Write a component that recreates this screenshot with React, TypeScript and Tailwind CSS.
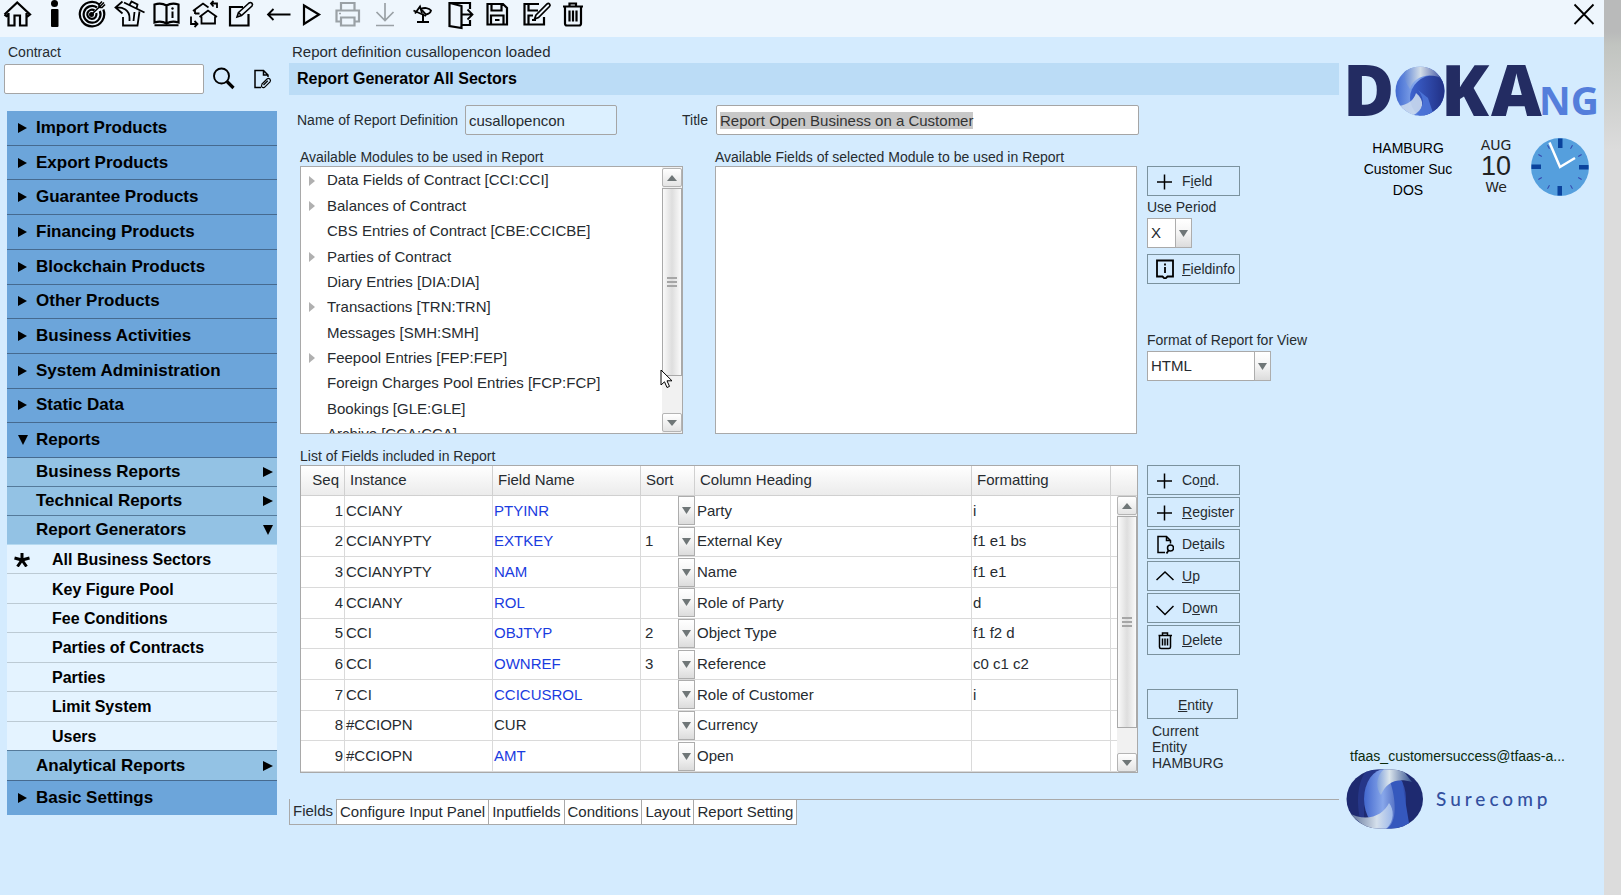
import { useEffect, useRef, type ReactNode } from "react";
import { cx } from "class-variance-authority";

const TOOL_SIZE = 37;

interface Tool {
  label: string;
  disabled?: boolean;
  drawing: ReactNode;
}

// Drawings share one strip, each tool shows its own 37px slice of it
const TOOLS: Tool[] = [
  {
    label: "Home",
    drawing: (
      <path d="M8.5 13V25.5H14.5V15.5H20V25.5H26.5V13M4.5 14.5L17.2 2.5L30 14.5L28 16L26.5 14.5M4.5 14.5L6.5 16L8.5 14" />
    ),
  },
  {
    label: "Info",
    drawing: (
      <g fill="currentColor" stroke="none">
        <circle cx="54.5" cy="3.5" r="3.5" />
        <rect x="51" y="9" width="7.5" height="18" rx="1" />
      </g>
    ),
  },
  {
    label: "Target",
    drawing: (
      <>
        <path d="M99.5 4.5A12.2 12.2 0 1 0 103.3 9.5" />
        <path d="M97 7.5A8.4 8.4 0 1 0 99.8 11" />
        <path d="M94.5 10.5A4.6 4.6 0 1 0 96.3 13" />
        <path d="M91 15L104 2.5M99 7.5V4.5L102 1.5M99.5 7.5H102L105 4.5" strokeWidth="1.6" />
        <circle cx="91.5" cy="14.5" r="1.4" fill="currentColor" />
      </>
    ),
  },
  {
    label: "Restore",
    drawing: (
      <>
        <path d="M122.500 1.500L115.500 7.500L122.500 13.500M116 7.500C123 7 129.500 10 129.500 18V21" strokeWidth="1.800" />
        <path
          d="M124 2.500L144.500 12.500M129.500 5L131.500 1.500L137.500 4.500L136.500 8.500M123 17V25.500H137.500L139.500 11.500M134.500 12L133.500 21"
          strokeWidth="1.800"
        />
      </>
    ),
  },
  {
    label: "Manual",
    drawing: (
      <>
        <path d="M166.500 5.500C163 3.500 158 3.500 154.500 4.500V22.500C158 21.500 163 21.500 166.500 23.500C170 21.500 175 21.500 178.500 22.500V4.500C175 3.500 170 3.500 166.500 5.500ZM166.500 5.500V23" />
        <path d="M154.500 25.200H178.500M172.500 11.500V18" strokeWidth="2" />
        <circle cx="172.500" cy="8.500" r="1.200" fill="currentColor" stroke="none" />
      </>
    ),
  },
  {
    label: "Switch entity",
    drawing: (
      <>
        <path d="M195 14V9.500L203 3.500L208.500 7.500M193 11L195 9.500M195 13.500H199.500" strokeWidth="1.800" />
        <path d="M201.500 16.500V23.500H215V16.500M199.500 17L208 10.500L217 17" strokeWidth="1.800" />
        <path d="M213.500 1L211 3.500L213.500 6.500M211 3.500H217V8M191 16.500V24H197M194.500 21L197.500 24L194.500 27" strokeWidth="1.800" />
      </>
    ),
  },
  {
    label: "Edit",
    drawing: (
      <>
        <path d="M243 7H230V25.500H248.500V14" />
        <path d="M238.500 12.500L249 3C251 1.500 253.500 4 252 6L241.500 15.500L237 17Z M239 13L241.500 15.500" strokeWidth="1.600" />
      </>
    ),
  },
  { label: "Back", drawing: <path d="M290.500 14.500H268M273.500 9L268 14.500L273.500 20" strokeWidth="1.800" /> },
  { label: "Run", drawing: <path d="M304 5.500V24L319 14.500Z" /> },
  {
    label: "Print",
    disabled: true,
    drawing: (
      <>
        <path d="M341 10V3H354.500V10M341 21.500H336.500V10.500H359V21.500H354.500M341 17.500H354.500V25.500H341Z" />
        <path d="M339 13.500H341" strokeWidth="1.500" />
      </>
    ),
  },
  {
    label: "Download",
    disabled: true,
    drawing: <path d="M385 3V20M376.500 12L385 20.500L393.500 12M376 25.500H394" strokeWidth="1.700" />,
  },
  {
    label: "Lamp",
    drawing: (
      <>
        <path d="M417 22H429M423 21.500V13.500" strokeWidth="2" />
        <path d="M413.500 10.500L426 16M415 13.500L420 6.500L422 13" strokeWidth="1.900" />
        <path d="M420.500 9C424 7.500 429 7.500 431 10.500C430.500 12.500 428.500 14 426 14.500L421.500 9.500" strokeWidth="1.800" />
      </>
    ),
  },
  {
    label: "Leave",
    drawing: (
      <>
        <path d="M470 9V3H449.500V26L461.500 28V6L450 3M462 25H470V20" />
        <path d="M462 14.500H472.500M467.500 9.500L472.500 14.500L467.500 19.500" strokeWidth="1.800" />
      </>
    ),
  },
  {
    label: "Save",
    drawing: (
      <path d="M487.500 4H503L507 8V24.500H487.500ZM491.500 4V10.500H501.500V4M491 24.500V15.500H503.500V24.500M495 20H499.500" />
    ),
  },
  {
    label: "Save as",
    drawing: (
      <>
        <path d="M539 4H524.500V24.500H544V17M528.500 4V10.500H538M528.500 24.500V15.500H533M532 20H536" />
        <path d="M536 15L547 4C549 2.500 551 5 549.500 6.500L538.500 17.500L534.500 19Z" strokeWidth="1.700" />
      </>
    ),
  },
  {
    label: "Delete",
    drawing: (
      <path d="M563 6.500H583M569.500 6V3.500H576V6M565 7V23.500Q565 25.500 567 25.500H579Q581 25.500 581 23.500V7M569.500 10.500V21.500M573 10.500V21.500M576.500 10.500V21.500" />
    ),
  },
];

const TOP_MENU = [
  "Import Products",
  "Export Products",
  "Guarantee Products",
  "Financing Products",
  "Blockchain Products",
  "Other Products",
  "Business Activities",
  "System Administration",
  "Static Data",
  "Reports",
];

const REPORT_MENU = ["Business Reports", "Technical Reports", "Report Generators"];

const GENERATOR_MENU = [
  "All Business Sectors",
  "Key Figure Pool",
  "Fee Conditions",
  "Parties of Contracts",
  "Parties",
  "Limit System",
  "Users",
];

const MODULES = [
  { name: "Data Fields of Contract [CCI:CCI]", open: true },
  { name: "Balances of Contract", open: true },
  { name: "CBS Entries of Contract [CBE:CCICBE]" },
  { name: "Parties of Contract", open: true },
  { name: "Diary Entries [DIA:DIA]" },
  { name: "Transactions [TRN:TRN]", open: true },
  { name: "Messages [SMH:SMH]" },
  { name: "Feepool Entries [FEP:FEP]", open: true },
  { name: "Foreign Charges Pool Entries [FCP:FCP]" },
  { name: "Bookings [GLE:GLE]" },
  { name: "Archive [CCA:CCA]" },
];

const FIELDS = [
  { instance: "CCIANY", field: "PTYINR", sort: "", heading: "Party", format: "i" },
  { instance: "CCIANYPTY", field: "EXTKEY", sort: "1", heading: "External Key", format: "f1 e1 bs" },
  { instance: "CCIANYPTY", field: "NAM", sort: "", heading: "Name", format: "f1 e1" },
  { instance: "CCIANY", field: "ROL", sort: "", heading: "Role of Party", format: "d" },
  { instance: "CCI", field: "OBJTYP", sort: "2", heading: "Object Type", format: "f1 f2 d" },
  { instance: "CCI", field: "OWNREF", sort: "3", heading: "Reference", format: "c0 c1 c2" },
  { instance: "CCI", field: "CCICUSROL", sort: "", heading: "Role of Customer", format: "i" },
  { instance: "#CCIOPN", field: "CUR", sort: "", heading: "Currency", format: "", plain: true },
  { instance: "#CCIOPN", field: "AMT", sort: "", heading: "Open", format: "" },
];

const TABS = ["Fields", "Configure Input Panel", "Inputfields", "Conditions", "Layout", "Report Setting"];

function Triangle({ dir, className = "size-[10px]" }: { dir: "right" | "down" | "up"; className?: string }) {
  const points = { right: "0,0 10,5 0,10", down: "0,0 10,0 5,10", up: "0,10 10,10 5,0" }[dir];
  return (
    <svg viewBox="0 0 10 10" preserveAspectRatio="none" className={cx("shrink-0", className)} aria-hidden="true">
      <polygon points={points} fill="currentColor" />
    </svg>
  );
}

function Toolbar() {
  return (
    <header className="flex h-[37px] items-start justify-between bg-[#eef6fd] text-black">
      <div className="flex">
        {TOOLS.map((tool, i) => (
          <button
            key={tool.label}
            type="button"
            aria-label={tool.label}
            disabled={tool.disabled}
            className={cx("size-[37px] shrink-0", tool.disabled && "text-[#9aa1a6]")}
          >
            <svg
              viewBox={`${i * TOOL_SIZE} 0 ${TOOL_SIZE} ${TOOL_SIZE}`}
              className="size-full overflow-visible"
              fill="none"
              stroke="currentColor"
              strokeWidth="2.2"
            >
              {tool.drawing}
            </svg>
          </button>
        ))}
      </div>
      <button type="button" aria-label="Close" className="mr-[9px] h-7 w-[22px]">
        <svg viewBox="0 0 22 28" className="size-full" fill="none" stroke="currentColor" strokeWidth="1.8">
          <path d="M1.500 4.500L20.500 24M20.500 4.500L1.500 24" />
        </svg>
      </button>
    </header>
  );
}

function Sidebar() {
  return (
    <div className="w-[289px] shrink-0">
      <label htmlFor="contract" className="flex h-[27px] items-center pl-2 pt-1 text-[14px]">
        Contract
      </label>
      <div className="flex h-[30px] items-center pl-1">
        <input id="contract" className="h-[30px] w-[200px] rounded-[2px] border border-[#a5a5a5] bg-white px-1 text-[15px]" />
        <button type="button" aria-label="Search contract" className="ml-2 size-6">
          <svg viewBox="0 0 24 24" fill="none" stroke="black" className="size-full">
            <circle cx="9.500" cy="9" r="7.500" strokeWidth="1.900" />
            <path d="M15 14.500L21.500 21" strokeWidth="3.200" />
          </svg>
        </button>
        <button type="button" aria-label="Attachments" className="ml-4 size-6">
          <svg viewBox="0 0 24 24" fill="none" stroke="black" strokeWidth="1.500" className="size-full">
            <path d="M9 20.500H3V3.500H11.500L16 8V10M11.500 3.500V8H16" />
            <path
              d="M9.500 17.500L15 12C17 10.500 19.500 12.500 18 14.800L12.500 20.300C10.500 21.500 8.500 19.500 10 17.500M11.500 18L15.800 13.800"
              strokeWidth="1.200"
            />
          </svg>
        </button>
      </div>

      <nav className="mt-[17px] ml-[7px] w-[270px] text-[17px] font-bold text-black">
        <ul className="grid h-[347px] auto-rows-fr">
          {TOP_MENU.map((item) => (
            <li key={item} className="border-b border-[#466a8f] bg-[#6ca5da]">
              <button type="button" className="flex size-full items-center pl-[11px] text-left leading-[32px]">
                <span className="w-[18px]">
                  <Triangle dir={item === "Reports" ? "down" : "right"} className={item === "Reports" ? "size-[10px]" : "h-[10px] w-[9px]"} />
                </span>
                {item}
              </button>
            </li>
          ))}
        </ul>
        <ul className="grid auto-rows-[29px]">
          {REPORT_MENU.map((item) => (
            <li key={item} className="border-b border-[#557a9a] bg-[#93c2e4] last:border-[#b5d9f0]">
              <button type="button" className="flex size-full items-center justify-between pl-[29px] pr-1 text-left">
                {item}
                <Triangle dir={item === "Report Generators" ? "down" : "right"} />
              </button>
            </li>
          ))}
        </ul>
        <ul className="grid h-[206px] auto-rows-fr text-[16px]">
          {GENERATOR_MENU.map((item, i) => (
            <li key={item} className="border-b border-[#bccad4] bg-[#e4f3ff] last:border-[#557a9a]">
              <button type="button" className="flex size-full items-center pt-0.5 pl-[7px] text-left">
                <span className="w-[38px]">
                  {i === 0 && (
                    <svg viewBox="0 0 16 14" className="h-[14px] w-4" stroke="black" strokeWidth="3">
                      <path d="M8 7V0M8 7L0.500 5M8 7L15.500 5M8 7L3.500 13.500M8 7L12.500 13.500" />
                    </svg>
                  )}
                </span>
                {item}
              </button>
            </li>
          ))}
        </ul>
        <button
          type="button"
          className="flex h-[30px] w-full items-center justify-between border-b border-[#466a8f] bg-[#93c2e4] pl-[29px] pr-1"
        >
          Analytical Reports
          <Triangle dir="right" />
        </button>
        <button type="button" className="flex h-[34px] w-full items-center bg-[#6ca5da] pl-[11px]">
          <span className="w-[18px]">
            <Triangle dir="right" className="h-[10px] w-[9px]" />
          </span>
          Basic Settings
        </button>
      </nav>
    </div>
  );
}

function ScrollBar({ thumb, track }: { thumb: string; track: string }) {
  const box = "flex h-[19px] shrink-0 items-center justify-center rounded-[2px] border border-[#b4b4b4] bg-gradient-to-b from-white to-[#e4e4e4]";
  return (
    <div className={cx("flex w-5 shrink-0 flex-col bg-[#f1f1f1] text-[#6f7677]", track)} aria-hidden="true">
      <div className={box}>
        <Triangle dir="up" className="h-[6px] w-[10px]" />
      </div>
      <div
        className={cx(
          "mt-px flex flex-col items-center justify-center gap-0.5 border border-[#a9a9a9] bg-gradient-to-r from-[#fafafa] via-[#dedede] to-[#fafafa]",
          thumb
        )}
      >
        <span className="h-0.5 w-[10px] bg-[#a6a6a6]" />
        <span className="h-0.5 w-[10px] bg-[#a6a6a6]" />
        <span className="h-0.5 w-[10px] bg-[#a6a6a6]" />
      </div>
      <div className={cx(box, "mt-auto")}>
        <Triangle dir="down" className="h-[6px] w-[10px]" />
      </div>
    </div>
  );
}

interface DropDownProps {
  id?: string;
  label?: string;
  value: string;
  className?: string;
  inTable?: boolean;
}

function DropDown({ id, label, value, className, inTable }: DropDownProps) {
  return (
    <div className={cx("relative", className)}>
      <select
        id={id}
        aria-label={label}
        defaultValue={value}
        className={cx(
          "size-full appearance-none bg-white text-[15px] outline-none",
          inTable ? "pl-1" : "border border-[#a9a9a9] pl-[3px]"
        )}
      >
        <option>{value}</option>
      </select>
      <span className="pointer-events-none absolute inset-y-0 right-0 flex w-[17px] items-center justify-center border border-[#adadad] bg-gradient-to-b from-white via-[#f4f4f4] to-[#dcdcdc] text-[#6f7677]">
        <Triangle dir="down" className="h-[7px] w-[9px]" />
      </span>
    </div>
  );
}

function ActionButton({ icon, children }: { icon: ReactNode; children: ReactNode }) {
  return (
    <button
      type="button"
      className="flex h-[30px] w-[93px] items-center gap-2 border border-[#7b929e] bg-[#d4ebfe] pl-2 text-[14px] whitespace-nowrap"
    >
      <svg viewBox="0 0 18 20" className="h-5 w-[18px] shrink-0" fill="none" stroke="black" strokeWidth="1.5">
        {icon}
      </svg>
      <span>{children}</span>
    </button>
  );
}

const PLUS = <path d="M1 11H16M8.500 3.500V18.500" />;

function ModuleTree() {
  return (
    <div className="relative flex h-[268px] w-[383px] border border-[#a9a9a9] bg-white">
      <div className="min-w-0 flex-1 overflow-hidden pt-px text-[15px]">
        <ul className="grid h-[279px] auto-rows-fr">
          {MODULES.map((m) => (
            <li key={m.name} className="flex items-center pl-2">
              <span className="w-[18px] text-[#b0b0b0]">
                {m.open && <Triangle dir="right" className="h-[10px] w-[6px]" />}
              </span>
              {m.name}
            </li>
          ))}
        </ul>
      </div>
      <ScrollBar track="py-px" thumb="h-[188px]" />
      {/* Mouse pointer */}
      <svg viewBox="0 0 13 20" className="absolute top-[202px] left-[359px] h-5 w-[13px]" aria-hidden="true">
        <path d="M1 1V16L4.500 12.800L7 18.500L9.500 17.400L7 11.800H12Z" fill="white" stroke="black" />
      </svg>
    </div>
  );
}

function FieldTable() {
  const th = "border-r border-b border-[#d0d0d0] px-[5px] text-left font-normal";
  const td = "border-r border-b border-[#dadada] px-px";
  return (
    <div className="flex h-[308px] border border-[#a9a9a9] bg-white">
      <div className="min-w-0 flex-1">
        <table className="h-[306px] w-full table-fixed border-separate border-spacing-0 text-[15px]">
          <colgroup>
            <col className="w-[44px]" />
            <col className="w-[148px]" />
            <col className="w-[148px]" />
            <col className="w-[54px]" />
            <col />
            <col className="w-[139px]" />
            <col className="w-[6px]" />
          </colgroup>
          <thead>
            <tr className="h-[30px] bg-gradient-to-b from-white to-[#ebebeb]">
              <th className="border-r border-b border-[#d0d0d0] pr-[5px] text-right font-normal">Seq</th>
              <th className={th}>Instance</th>
              <th className={th}>Field Name</th>
              <th className={th}>Sort</th>
              <th className={th}>Column Heading</th>
              <th className={th}>Formatting</th>
              <th className="border-b border-[#d0d0d0]" aria-label="Scroll" />
            </tr>
          </thead>
          <tbody>
            {FIELDS.map((row, i) => (
              <tr key={row.field}>
                <td className={cx(td, "text-right")}>{i + 1}</td>
                <td className={td}>{row.instance}</td>
                <td className={cx(td, !row.plain && "text-[#1a3ce0]")}>{row.field}</td>
                <td className="border-b border-[#dadada]">
                  <DropDown inTable label={`Sort ${row.field}`} value={row.sort} className="h-[29px]" />
                </td>
                <td className={cx(td, "pl-0.5")}>{row.heading}</td>
                <td className={td}>{row.format}</td>
                <td className="border-b border-[#dadada]" />
              </tr>
            ))}
          </tbody>
        </table>
      </div>
      <div className="flex flex-col">
        <div className="h-[30px] border-b border-[#d0d0d0] bg-gradient-to-b from-white to-[#ebebeb]" />
        <ScrollBar track="flex-1" thumb="h-[212px]" />
      </div>
    </div>
  );
}

function Main() {
  const titleRef = useRef<HTMLInputElement>(null);

  useEffect(() => {
    titleRef.current?.select();
  }, []);

  return (
    <main className="min-w-0 flex-1">
      <p className="flex h-[26px] items-center pt-1 pl-[3px] text-[15px]">Report definition cusallopencon loaded</p>
      <h1 className="flex h-8 items-center bg-[#bbdcf6] pl-2 text-[16px] font-bold text-black">
        Report Generator All Sectors
      </h1>

      <div className="mt-[10px] flex h-[30px] items-center pr-[200px] pl-2 text-[14px]">
        <label htmlFor="defname" className="w-[168px]">
          Name of Report Definition
        </label>
        <input
          id="defname"
          readOnly
          value="cusallopencon"
          className="h-full w-[152px] rounded-[2px] border border-[#a5a5a5] bg-[#dcf0ff] px-[3px] text-[15px]"
        />
        <label htmlFor="title" className="w-[99px] pr-2 text-right">
          Title
        </label>
        <input
          id="title"
          ref={titleRef}
          defaultValue="Report Open Business on a Customer"
          className="h-full min-w-0 flex-1 rounded-[2px] border border-[#a5a5a5] bg-white px-[3px] text-[15px] outline-none selection:bg-[#c8c8c8] selection:text-[#333333]"
        />
      </div>

      <div className="flex gap-[10px] pl-[11px]">
        <section className="flex min-w-0 flex-1 gap-8 text-[14px]">
          <div>
            <h2 className="flex h-[31px] items-end leading-[18px]">Available Modules to be used in Report</h2>
            <ModuleTree />
          </div>
          <div className="min-w-0 flex-1">
            <h2 className="flex h-[31px] items-end leading-[18px]">Available Fields of selected Module to be used in Report</h2>
            <div className="h-[268px] border border-[#a9a9a9] bg-white" />
          </div>
        </section>
        <section className="flex w-[192px] flex-col items-start pt-[31px] text-[14px]">
          <ActionButton icon={PLUS}>
            F<u>i</u>eld
          </ActionButton>
          <label htmlFor="period" className="pt-px leading-[21px]">
            Use Period
          </label>
          <DropDown id="period" value="X" className="h-[30px] w-[45px]" />
          <div className="mt-[6px]">
            <ActionButton
              icon={
                <>
                  <path d="M1 1.500H17V17.500H11.500L9 20L6.500 17.500H1Z" strokeWidth="1.800" />
                  <path d="M9 8V14M9 4.500V6.500" strokeWidth="1.800" />
                </>
              }
            >
              <u>F</u>ieldinfo
            </ActionButton>
          </div>
          <label htmlFor="format" className="mt-[46px] leading-[21px]">
            Format of Report for View
          </label>
          <DropDown id="format" value="HTML" className="h-[30px] w-[124px]" />
        </section>
      </div>

      <div className="flex gap-[9px] pl-[11px]">
        <section className="min-w-0 flex-1 text-[14px]">
          <h2 className="flex h-[31px] items-end leading-[18px]">List of Fields included in Report</h2>
          <FieldTable />
        </section>
        <section className="flex w-[192px] flex-col items-start gap-0.5 pt-[31px]">
          <ActionButton icon={PLUS}>
            Co<u>n</u>d.
          </ActionButton>
          <ActionButton icon={PLUS}>
            <u>R</u>egister
          </ActionButton>
          <ActionButton
            icon={
              <>
                <path d="M9 18.500H2V2.500H10.500L14.500 6.500V9.500M10.500 2.500V6.500H14.500" />
                <circle cx="14.500" cy="14" r="3" />
                <path d="M12.500 16.500L10.500 19.500" strokeWidth="1.800" />
              </>
            }
          >
            De<u>t</u>ails
          </ActionButton>
          <ActionButton icon={<path d="M0.500 14L9 6L17.500 14" />}>
            <u>U</u>p
          </ActionButton>
          <ActionButton icon={<path d="M0.500 8L9 16.500L17.500 8" />}>
            D<u>o</u>wn
          </ActionButton>
          <ActionButton
            icon={
              <path d="M2.500 5.500H16M6.500 5V3H11.500V5M3.500 5.500V17Q3.500 18.500 5 18.500H13Q14.500 18.500 14.500 17V5.500M6.500 8.500V15.500M9 8.500V15.500M11.500 8.500V15.500" />
            }
          >
            <u>D</u>elete
          </ActionButton>
          <button type="button" className="mt-8 h-[30px] w-[91px] border border-[#7b929e] pt-0.5 pl-[6px] text-[14px]">
            <u>E</u>ntity
          </button>
          <p className="pt-0.5 pl-[5px] text-[14px] leading-4">
            Current
            <br />
            Entity
            <br />
            HAMBURG
          </p>
        </section>
      </div>

      <div role="tablist" className="mt-[26px] flex h-[26px] text-[15px]">
        {TABS.map((tab, i) => (
          <button
            key={tab}
            type="button"
            role="tab"
            aria-selected={i === 0}
            className={cx(
              "border-r border-b border-[#a9a9a9] px-[3px] whitespace-nowrap",
              i === 0 ? "border-l" : "border-t bg-white"
            )}
          >
            {tab}
          </button>
        ))}
        <div className="flex-1 border-t border-[#a9a9a9]" />
      </div>
    </main>
  );
}

const CLOCK_MARKS = [30, 60, 120, 150, 210, 240, 300, 330];

function Clock() {
  return (
    <svg viewBox="-29 -29 58 58" className="size-[58px]" role="img" aria-label="Clock">
      <circle r="29" fill="#559fdd" />
      {[0, 90, 180, 270].map((a) => (
        <rect key={a} x="-2" y="-28.500" width="4.500" height="9.500" fill="#0a429c" transform={`rotate(${a})`} />
      ))}
      {CLOCK_MARKS.map((a) => (
        <path key={a} d="M0 -25V-21" stroke="#3546ae" strokeWidth="1" transform={`rotate(${a})`} />
      ))}
      <path d="M-10.500 -24.500L0 0L15 -9" fill="none" stroke="white" strokeWidth="2.500" />
    </svg>
  );
}

function Brand() {
  return (
    <svg viewBox="0 0 250 52" className="h-[52px] w-[250px] overflow-visible" role="img" aria-label="DOKA NG">
      <defs>
        <linearGradient id="orbL" x1="0" x2="1">
          <stop offset="0" stopColor="#3f68cf" />
          <stop offset="0.450" stopColor="#8fb0ee" />
          <stop offset="0.700" stopColor="#3f66cf" />
        </linearGradient>
        <linearGradient id="orbR" x1="0" x2="1">
          <stop offset="0" stopColor="#3d63d0" />
          <stop offset="0.600" stopColor="#25378f" />
          <stop offset="1" stopColor="#1b2566" />
        </linearGradient>
        <linearGradient id="orbT" x1="0" x2="1">
          <stop offset="0" stopColor="#5f85d6" />
          <stop offset="0.400" stopColor="#d3dee8" />
          <stop offset="1" stopColor="#2c4099" />
        </linearGradient>
        <clipPath id="orb">
          <circle cx="72" cy="25" r="24.500" />
        </clipPath>
      </defs>
      <g clipPath="url(#orb)">
        <rect x="47" width="50" height="50" fill="url(#orbL)" />
        <ellipse cx="87" cy="32" rx="25" ry="23" fill="url(#orbR)" />
        <path d="M56 6C66 -4 92 -4 97 14C82 5 66 10 62 23C58 18 56 12 56 6Z" fill="url(#orbT)" />
        <path d="M50 40C60 39 66 34 68 27C77 34 76 44 66 50H54Z" fill="#cbdaee" opacity="0.900" />
        <path d="M64 50C76 44 78 34 70 24L80 32L86 50Z" fill="#4f78dc" opacity="0.850" />
      </g>
      <g fontFamily="'Open Sans', 'Noto Sans', sans-serif">
        <g fontSize="70" fontWeight="800" fill="#232c62">
          <text x="-5" y="50">D</text>
          <text x="93" y="50">K</text>
          <text x="143" y="50">A</text>
        </g>
        <text x="191" y="49" fontSize="39" fontWeight="700" fill="#547edb">
          NG
        </text>
      </g>
    </svg>
  );
}

function Aside() {
  return (
    <aside className="flex w-[265px] shrink-0 flex-col pt-[29px] pb-[66px] pl-[9px]">
      <Brand />
      <div className="mt-5 flex items-start text-black">
        <p className="w-[120px] text-center text-[14px] leading-[21px]">
          HAMBURG
          <br />
          Customer Suc
          <br />
          DOS
        </p>
        <p className="flex w-[56px] flex-col items-center font-['DejaVu_Sans',sans-serif] text-[14px] leading-[14px] text-[#222222]">
          <span>AUG</span>
          <span className="font-['Liberation_Sans',sans-serif] text-[27px] leading-[28px]">10</span>
          <span>We</span>
        </p>
        <div className="ml-[7px]">
          <Clock />
        </div>
      </div>

      <p className="mt-auto pl-0.5 text-[14px] text-[#0b2a0b]">tfaas_customersuccess@tfaas-a...</p>
      <div className="mt-[2px] flex items-center">
        <svg viewBox="0 0 78 60" className="-ml-0.5 h-[60px] w-[78px]" role="img" aria-label="Surecomp logo">
          <defs>
            <clipPath id="pill">
              <rect x="0.500" y="0.500" width="76.500" height="59" rx="32" ry="29.500" />
            </clipPath>
            <linearGradient id="mid" x1="0" x2="1">
              <stop offset="0" stopColor="#4267ce" />
              <stop offset="0.450" stopColor="#88a7ea" />
              <stop offset="1" stopColor="#2a45a6" />
            </linearGradient>
            <linearGradient id="silver" x1="0" x2="1">
              <stop offset="0" stopColor="#7fa0dc" />
              <stop offset="0.350" stopColor="#dbe5ec" />
              <stop offset="1" stopColor="#32508f" />
            </linearGradient>
            <linearGradient id="silverLow" x1="1" x2="0">
              <stop offset="0" stopColor="#9db8ea" />
              <stop offset="0.350" stopColor="#d5e0ec" />
              <stop offset="1" stopColor="#50648c" />
            </linearGradient>
          </defs>
          <g clipPath="url(#pill)">
            <rect width="78" height="60" fill="#1e2a70" />
            <path d="M22 0H38C26 6 20 16 18 28V52L14 50C10 30 12 10 22 0Z" fill="#2b3f97" opacity="0.600" />
            <ellipse cx="39" cy="30" rx="21" ry="30" fill="url(#mid)" />
            <path d="M44 12H56L64 60H40C52 54 50 30 44 12Z" fill="#3558bd" />
            <path d="M38 0H56L66 13C50 8 40 14 35 26C30 20 29 8 38 0Z" fill="url(#silver)" />
            <path d="M40 60H22L1 43C20 54 37 47 43 34C48 40 49 52 40 60Z" fill="url(#silverLow)" />
          </g>
        </svg>
        <span className="ml-3 font-[Lato,sans-serif] text-[19px] font-medium tracking-[4px] text-[#3350a0]">Surecomp</span>
      </div>
    </aside>
  );
}

export default function App() {
  return (
    <div className="flex min-h-screen bg-[#d4ebfe] font-['Liberation_Sans',Arial,sans-serif] text-[#262b30]">
      <div className="flex min-w-0 flex-1 flex-col">
        <Toolbar />
        <div className="flex flex-1">
          <Sidebar />
          <Main />
          <Aside />
        </div>
      </div>
      <div className="w-[17px] shrink-0 bg-[linear-gradient(to_bottom,#b9baba_0,#b9baba_32px,#c1c4c0_45px,#dcdcdc_150px)]" />
    </div>
  );
}
